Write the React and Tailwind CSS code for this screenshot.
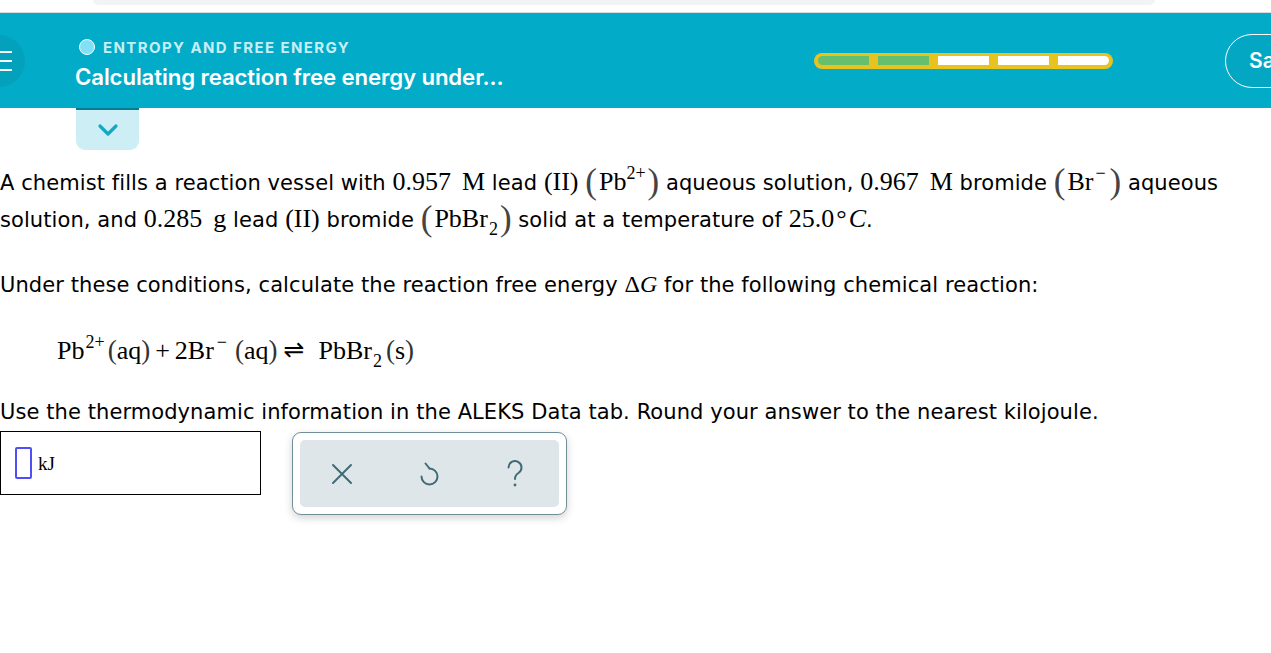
import React from "react";

function M({ children, className = "" }) {
  return (
    <span className={"font-['Liberation_Serif',serif] text-[26px] tracking-normal " + className}>
      {children}
    </span>
  );
}

function Unit({ children }) {
  return <span className="ml-[11px]">{children}</span>;
}

function BigParen({ children }) {
  return (
    <span className="font-['Liberation_Serif',serif] whitespace-nowrap tracking-normal">
      <span className="text-[35px] leading-none text-[#444] align-[-3px] mr-[2px]">(</span>
      <span className="text-[26px]">{children}</span>
      <span className="text-[35px] leading-none text-[#444] align-[-3px] ml-[2px]">)</span>
    </span>
  );
}

function Sup({ children, className = "" }) {
  return <span className={"text-[18px] align-[11px] leading-none " + className}>{children}</span>;
}
function Sub({ children }) {
  return <span className="text-[18px] align-[-8px] leading-none ml-[1px]">{children}</span>;
}

function EqParen({ children, className = "" }) {
  return <span className={"text-[27px] text-[#333] " + className}>{children}</span>;
}

function ProgressBar() {
  const segs = [true, true, false, false, false];
  return (
    <div className="w-[299px] h-[16px] rounded-full bg-[#e8c31e] flex items-center gap-[9px] px-[4px]">
      {segs.map((g, i) => (
        <div
          key={i}
          className={
            "h-[9px] flex-1 " +
            (g ? "bg-[#66bf6f]" : "bg-white") +
            (i === 0 ? " rounded-l-full" : "") +
            (i === 4 ? " rounded-r-full" : "")
          }
        />
      ))}
    </div>
  );
}

export default function App() {
  return (
    <div className="w-[1271px] h-[653px] overflow-hidden bg-white relative font-['DejaVu_Sans',sans-serif] text-black">
      {/* browser strip */}
      <div className="h-[13px] border-b border-[#d9dbde] flex items-start">
        <div className="ml-[93px] w-[1062px] h-[5px] bg-[#f1f3f4] rounded-b-[14px]" />
      </div>

      {/* header */}
      <div className="h-[95px] bg-[#02acc8] flex items-center relative">
        <div className="ml-[-27px] w-[52px] h-[52px] rounded-full bg-[#03a1bc] flex flex-col items-end justify-center gap-[7px] pr-[13px]">
          <div className="w-[13px] h-[2px] bg-white" />
          <div className="w-[13px] h-[2px] bg-white" />
          <div className="w-[13px] h-[2px] bg-white" />
        </div>
        <div className="ml-[50px] flex flex-col self-start mt-[26px]">
          <div className="flex items-center gap-[8px] ml-[4px] h-[16px]">
            <div className="w-[16px] h-[16px] rounded-full bg-[#7fe0f6] border-[1.5px] border-white" />
            <div className="font-['Inter',sans-serif] font-bold text-[15px] text-[#c8eef5] tracking-[1.4px] leading-none">
              ENTROPY AND FREE ENERGY
            </div>
          </div>
          <div className="font-['Inter',sans-serif] font-semibold text-[22.2px] text-white mt-[10px] leading-[24px] tracking-[-0.1px]">
            Calculating reaction free energy under...
          </div>
        </div>
        <div className="ml-auto mr-[158px]">
          <ProgressBar />
        </div>
        <div className="absolute left-[1225px] top-[21px] w-[120px] h-[54px] rounded-full border border-white bg-[#03a7c3] flex items-center pl-[23px]">
          <span className="font-['Inter',sans-serif] font-semibold text-[21px] text-white">Save</span>
        </div>
      </div>

      {/* tab */}
      <div className="ml-[76px] w-[63px] h-[42px] rounded-b-[9px] bg-[#cdeef4] border-t-[2px] border-[#047d90] flex items-center justify-center">
        <svg width="22" height="14" viewBox="0 0 22 14">
          <path d="M3 3 L11 11 L19 3" fill="none" stroke="#13a8c4" strokeWidth="3.2" strokeLinecap="round" strokeLinejoin="round" />
        </svg>
      </div>

      {/* content */}
      <div className="text-[21px] leading-[35px] tracking-[0.08px] mt-[14px]">
        <p>
          A chemist fills a reaction vessel with{" "}
          <M>
            0.957<Unit>M</Unit>
          </M>{" "}
          lead <M>(II)</M>{" "}
          <BigParen>
            Pb<Sup>2+</Sup>
          </BigParen>{" "}
          aqueous solution,{" "}
          <M>
            0.967<Unit>M</Unit>
          </M>{" "}
          bromide{" "}
          <BigParen>
            Br<Sup className="ml-[2px] mr-[2px]">−</Sup>
          </BigParen>{" "}
          aqueous
          <br />
          solution, and{" "}
          <M>
            0.285<Unit>g</Unit>
          </M>{" "}
          lead <M>(II)</M> bromide{" "}
          <BigParen>
            PbBr<Sub>2</Sub>
          </BigParen>{" "}
          solid at a temperature of{" "}
          <M>
            25.0<span className="ml-[2px]">°</span><i className="ml-[2px]">C</i>
          </M>
          .
        </p>

        <p className="mt-[29px]">
          Under these conditions, calculate the reaction free energy{" "}
          <span className="font-['Liberation_Serif',serif] text-[24px] tracking-normal">
            Δ<i>G</i>
          </span>{" "}
          for the following chemical reaction:
        </p>

        <div className="mt-[29px] ml-[57px] font-['Liberation_Serif',serif] text-[26px] leading-[35px] whitespace-nowrap tracking-normal">
          Pb<Sup className="ml-[1px]">2+</Sup>
          <EqParen className="ml-[3px]">(</EqParen>aq<EqParen>)</EqParen>
          <span className="mx-[5px]">+</span>2Br<Sup className="ml-[3px]">−</Sup>
          <EqParen className="ml-[8px]">(</EqParen>aq<EqParen>)</EqParen>
          <span className="font-['DejaVu_Sans',sans-serif] text-[25px] ml-[6px] mr-[14px] align-[1px]">⇌</span>
          PbBr<Sub>2</Sub>
          <EqParen className="ml-[4px]">(</EqParen>s<EqParen>)</EqParen>
        </div>

        <p className="mt-[25px]">
          Use the thermodynamic information in the ALEKS Data tab. Round your answer to the nearest kilojoule.
        </p>

        <div className="flex items-start mt-[1px]">
          <div className="w-[261px] h-[64px] border-[1.5px] border-black flex items-center pl-[14px]">
            <div className="w-[17px] h-[32px] border-2 border-[#4f4ff7] rounded-[2px]" />
            <span className="font-['Liberation_Serif',serif] text-[19px] ml-[6px] tracking-normal">kJ</span>
          </div>
          <div className="ml-[31px] mt-[1px] w-[275px] h-[83px] rounded-[9px] border border-[#6f8f99] bg-white shadow-[0_3px_8px_rgba(0,0,0,0.18)] p-[7px]">
            <div className="w-full h-full rounded-[5px] bg-[#dfe6e9] flex items-center justify-between pl-[31px] pr-[34px]">
              <svg width="22" height="22" viewBox="0 0 22 22">
                <path d="M2 2 L20 20 M20 2 L2 20" stroke="#3f6b78" strokeWidth="2" strokeLinecap="round" />
              </svg>
              <svg width="22" height="28" viewBox="0 0 22 28">
                <path d="M11.5 8.5 A8 8 0 1 1 3.5 16.5" fill="none" stroke="#3f6b78" strokeWidth="2" strokeLinecap="round" />
                <path d="M7.5 3.5 L11.5 8.5" fill="none" stroke="#3f6b78" strokeWidth="2" strokeLinecap="round" strokeLinejoin="round" />
              </svg>
              <svg width="20" height="30" viewBox="0 0 20 30">
                <path d="M3.5 8.5 A6.5 6.5 0 1 1 13.5 14 C11 15.5 10 17 10 20" fill="none" stroke="#3f6b78" strokeWidth="2" strokeLinecap="round" />
                <circle cx="10" cy="26" r="1.4" fill="#3f6b78" />
              </svg>
            </div>
          </div>
        </div>
      </div>
    </div>
  );
}
